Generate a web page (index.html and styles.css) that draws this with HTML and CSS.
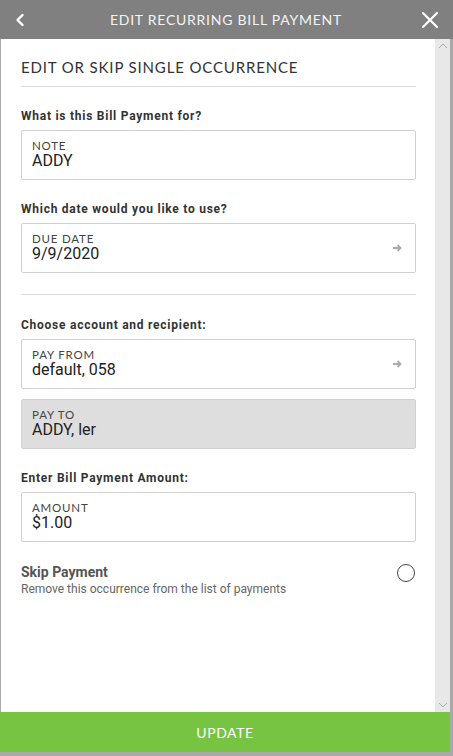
FILE: index.html
```html
<!DOCTYPE html>
<html lang="en">

<head>
    <meta charset="UTF-8">
    <meta name="viewport" content="width=device-width, initial-scale=1.0">
    <title>Edit Recurring Bill Payment</title>
    <link rel="stylesheet" href="styles.css">
</head>

<body>
    <div class="modal">
        <div class="modal-header">
            <span class="modal-back">
                <svg width="10" height="14" viewBox="0 0 10 14"><path d="M7.5 2 L2.5 7 L7.5 12" fill="none" stroke="#fff" stroke-width="2.4" stroke-linecap="round" stroke-linejoin="round"/></svg>
            </span>
            <h1 class="modal-title">EDIT RECURRING BILL PAYMENT</h1>
            <span class="modal-close">
                <svg width="18" height="18" viewBox="0 0 18 18"><path d="M2 2 L16 16 M16 2 L2 16" fill="none" stroke="#fff" stroke-width="2.2" stroke-linecap="round"/></svg>
            </span>
        </div>
        <div class="modal-main">
            <div class="modal-body">
                <h2 class="section-title">EDIT OR SKIP SINGLE OCCURRENCE</h2>

                <div class="field-question">What is this Bill Payment for?</div>
                <div class="field">
                    <div class="field-text">
                        <div class="field-label">NOTE</div>
                        <div class="field-value">ADDY</div>
                    </div>
                </div>

                <div class="field-question">Which date would you like to use?</div>
                <div class="field">
                    <div class="field-text">
                        <div class="field-label">DUE DATE</div>
                        <div class="field-value">9/9/2020</div>
                    </div>
                    <svg class="field-arrow" width="10" height="8" viewBox="0 0 10 8"><path d="M1 4 H8.5 M5.5 1 L8.5 4 L5.5 7" fill="none" stroke="#aaa" stroke-width="1.8"/></svg>
                </div>

                <div class="divider"></div>

                <div class="field-question">Choose account and recipient:</div>
                <div class="field">
                    <div class="field-text">
                        <div class="field-label">PAY FROM</div>
                        <div class="field-value">default, 058</div>
                    </div>
                    <svg class="field-arrow" width="10" height="8" viewBox="0 0 10 8"><path d="M1 4 H8.5 M5.5 1 L8.5 4 L5.5 7" fill="none" stroke="#aaa" stroke-width="1.8"/></svg>
                </div>
                <div class="field field-disabled">
                    <div class="field-text">
                        <div class="field-label">PAY TO</div>
                        <div class="field-value">ADDY, ler</div>
                    </div>
                </div>

                <div class="field-question">Enter Bill Payment Amount:</div>
                <div class="field">
                    <div class="field-text">
                        <div class="field-label">AMOUNT</div>
                        <div class="field-value">$1.00</div>
                    </div>
                </div>

                <div class="skip-row">
                    <div class="skip-text">
                        <div class="skip-title">Skip Payment</div>
                        <div class="skip-desc">Remove this occurrence from the list of payments</div>
                    </div>
                    <span class="skip-radio"></span>
                </div>
            </div>
            <div class="scrollbar">
                <svg width="10" height="6" viewBox="0 0 10 6"><path d="M1 5 L5 1 L9 5" fill="none" stroke="#aaa" stroke-width="1"/></svg>
                <svg width="10" height="6" viewBox="0 0 10 6"><path d="M1 1 L5 5 L9 1" fill="none" stroke="#aaa" stroke-width="1"/></svg>
            </div>
        </div>
        <button class="update-btn">UPDATE</button>
    </div>
</body>

</html>
```

FILE: styles.css
```css
* {
    margin: 0;
    padding: 0;
    box-sizing: border-box;
}

body {
    width: 453px;
    height: 756px;
    background: #a9a9a9;
    font-family: Roboto, "Liberation Sans", sans-serif;
    overflow: hidden;
}

.modal {
    display: flex;
    flex-direction: column;
    height: 752px;
}

.modal-header {
    height: 39px;
    background: #808080;
    display: flex;
    align-items: center;
    padding: 0 14px 0 15px;
}

.modal-back {
    width: 24px;
    display: flex;
    align-items: center;
}

.modal-title {
    flex: 1;
    text-align: center;
    font: 400 14px Lato, "Open Sans", sans-serif;
    letter-spacing: 0.75px;
    color: #f4f4f4;
    padding-right: 2px;
}

.modal-close {
    width: 24px;
    display: flex;
    justify-content: flex-end;
    align-items: center;
}

.modal-main {
    flex: 1;
    display: flex;
    margin-left: 1px;
    width: 449px;
    min-height: 0;
}

.modal-body {
    flex: 1;
    background: #fff;
    padding: 18px 19px 0 20px;
}

.scrollbar {
    width: 15px;
    background: #e8e8e8;
    display: flex;
    flex-direction: column;
    justify-content: space-between;
    align-items: center;
    padding: 4px 0 4px;
}

.section-title {
    font: 400 15px Lato, "Open Sans", sans-serif;
    letter-spacing: 0.85px;
    line-height: 20px;
    color: #333;
    padding-bottom: 9px;
    border-bottom: 1px solid #dcdcdc;
}

.field-question {
    margin-top: 21px;
    margin-bottom: 6px;
    font-size: 12px;
    font-weight: 700;
    letter-spacing: 0.75px;
    line-height: 16px;
    color: #333;
}

.field {
    display: flex;
    height: 50px;
    border: 1px solid #d0d0d0;
    border-radius: 2px;
    padding: 8px 13px 0 10px;
    align-items: flex-start;
}

.field + .field {
    margin-top: 10px;
}

.field-disabled {
    background: #dedede;
}

.field-text {
    flex: 1;
}

.field-label {
    font: 400 11.5px Lato, "Open Sans", sans-serif;
    letter-spacing: 0.8px;
    line-height: 13px;
    color: #444;
}

.field-value {
    font-size: 16px;
    line-height: 18px;
    color: #222;
}

.field-arrow {
    margin-top: 12px;
}

.divider {
    margin-top: 21px;
    border-top: 1px solid #dcdcdc;
}

.divider + .field-question {
    margin-top: 22px;
}

.skip-row {
    display: flex;
    align-items: flex-start;
    margin-top: 21px;
}

.skip-text {
    flex: 1;
}

.skip-title {
    font-size: 14px;
    font-weight: 700;
    line-height: 18px;
    color: #555;
}

.skip-desc {
    margin-top: 1px;
    font-size: 12px;
    line-height: 15px;
    color: #666;
}

.skip-radio {
    width: 18px;
    height: 18px;
    border: 1px solid #444;
    border-radius: 50%;
    margin-top: 1px;
    margin-right: 1px;
}

.update-btn {
    width: 450px;
    height: 40px;
    border: none;
    background: #76c442;
    color: #fff;
    font: 400 14px Lato, "Open Sans", sans-serif;
    letter-spacing: 0.6px;
}
```
